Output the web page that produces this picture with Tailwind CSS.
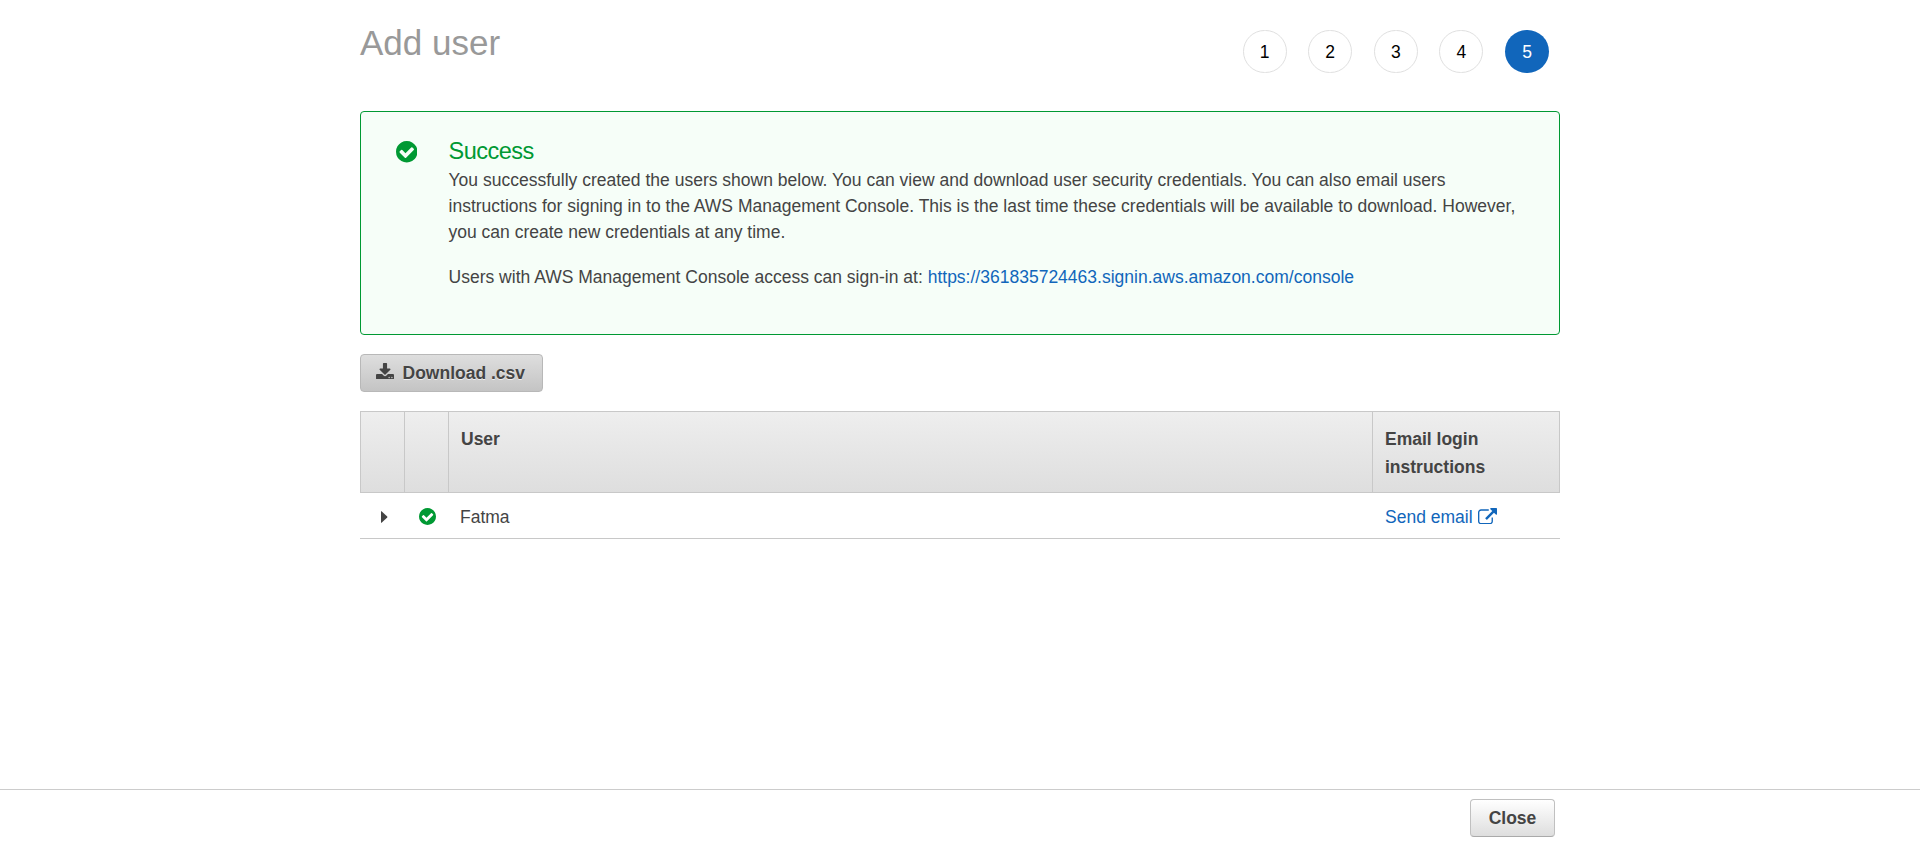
<!DOCTYPE html>
<html lang="en">
<head>
<meta charset="utf-8">
<title>Add user</title>
<script src="https://cdn.jsdelivr.net/npm/@tailwindcss/browser@4"></script>
</head>
<body class="h-screen overflow-hidden bg-white font-['Liberation_Sans',Arial,sans-serif] text-[17.5px] text-[#444] flex flex-col">
<main class="mx-auto w-[1200px] flex-1">
  <header class="flex h-[111px] justify-between pr-[11px]">
    <h1 class="pt-[22px] text-[35px] leading-[42px] text-[#999]">Add user</h1>
    <ol class="flex gap-[21.6px] pt-[30px] text-black">
      <li class="flex h-[43px] w-[44px] items-center justify-center rounded-full border border-[#e0e0e0] pt-[2px]">1</li>
      <li class="flex h-[43px] w-[44px] items-center justify-center rounded-full border border-[#e0e0e0] pt-[2px]">2</li>
      <li class="flex h-[43px] w-[44px] items-center justify-center rounded-full border border-[#e0e0e0] pt-[2px]">3</li>
      <li class="flex h-[43px] w-[44px] items-center justify-center rounded-full border border-[#e0e0e0] pt-[2px]">4</li>
      <li class="flex h-[43px] w-[44px] items-center justify-center rounded-full bg-[#1166bb] pt-[2px] text-white">5</li>
    </ol>
  </header>

  <section class="flex h-[224px] rounded-[4px] border border-[#009933] bg-[#f6fef8] pl-[34.5px] pt-[25px]">
    <svg class="mt-[4px] h-[21.5px] w-[21.5px] shrink-0 fill-[#009933]" viewBox="128 128 1536 1536"><path d="M1412 734q0-28-18-46l-91-90q-19-19-45-19t-45 19l-408 407-226-226q-19-19-45-19t-45 19l-91 90q-18 18-18 46 0 27 18 45l362 362q19 19 45 19 27 0 46-19l543-543q18-18 18-45zm252 162q0 209-103 385.5t-279.5 279.5-385.5 103-385.5-103-279.5-279.5-103-385.5 103-385.5 279.5-279.5 385.5-103 385.5 103 279.5 279.5 103 385.5z"/></svg>
    <div class="ml-[31.5px] whitespace-nowrap leading-[26px] tracking-[0.005px]">
      <h2 class="text-[23.5px] leading-[28px] tracking-[-0.5px] pb-[2px] text-[#009933]">Success</h2>
      <p>You successfully created the users shown below. You can view and download user security credentials. You can also email users<br>instructions for signing in to the AWS Management Console. This is the last time these credentials will be available to download. However,<br>you can create new credentials at any time.</p>
      <p class="mt-[19px]">Users with AWS Management Console access can sign-in at: <a class="text-[#1166bb]">https://361835724463.signin.aws.amazon.com/console</a></p>
    </div>
  </section>

  <button class="mt-[19px] flex h-[38px] w-[183px] items-center rounded-[4px] border border-[#b8b8b8] bg-linear-to-b from-[#dedede] to-[#c4c4c4] pl-[15px] font-bold text-[#444] text-shadow-[0_1px_0_#eee]">
    <svg class="mr-[8.5px] mb-[4px] h-[16.6px] w-[18px] fill-[#444]" viewBox="64 0 1664 1536"><path d="M1344 1344q0-26-19-45t-45-19-45 19-19 45 19 45 45 19 45-19 19-45zm256 0q0-26-19-45t-45-19-45 19-19 45 19 45 45 19 45-19 19-45zm128-224v320q0 40-28 68t-68 28h-1472q-40 0-68-28t-28-68v-320q0-40 28-68t68-28h465l135 136q58 56 136 56t136-56l136-136h464q40 0 68 28t28 68zm-325-569q17 41-14 70l-448 448q-18 19-45 19t-45-19l-448-448q-31-29-14-70 17-39 59-39h256v-448q0-26 19-45t45-19h256q26 0 45 19t19 45v448h256q42 0 59 39z"/></svg>
    <span>Download .csv</span>
  </button>

  <div class="mt-[19px] grid h-[82px] grid-cols-[44px_44px_924px_188px] border border-[#c8c8c8] bg-linear-to-b from-[#eee] to-[#dedede] font-bold leading-[28px]">
    <div class="border-r border-[#c8c8c8]"></div>
    <div class="border-r border-[#c8c8c8]"></div>
    <div class="border-r border-[#c8c8c8] pl-[12px] pt-[13px]">User</div>
    <div class="pl-[12px] pt-[13px]">Email login<br>instructions</div>
  </div>
  <div class="grid h-[46px] grid-cols-[45px_44px_924px_187px] items-center border-b border-[#c8c8c8] pt-[3px]">
    <svg class="ml-[20.5px] h-[12px] w-[7px] fill-[#444]" viewBox="0 0 7 12"><path d="M0 .6Q0 0 .6.3L6.2 5.5Q6.7 6 6.2 6.5L.6 11.7Q0 12 0 11.4Z"/></svg>
    <svg class="ml-[14px] mb-px h-[17px] w-[17px] fill-[#009933]" viewBox="128 128 1536 1536"><path d="M1412 734q0-28-18-46l-91-90q-19-19-45-19t-45 19l-408 407-226-226q-19-19-45-19t-45 19l-91 90q-18 18-18 46 0 27 18 45l362 362q19 19 45 19 27 0 46-19l543-543q18-18 18-45zm252 162q0 209-103 385.5t-279.5 279.5-385.5 103-385.5-103-279.5-279.5-103-385.5 103-385.5 279.5-279.5 385.5-103 385.5 103 279.5 279.5 103 385.5z"/></svg>
    <span class="pl-[11px]">Fatma</span>
    <a class="flex items-center pl-[12px] text-[#1166bb]">Send email<svg class="ml-[5px] mb-[2px] h-[16.3px] w-[19px] fill-[#1166bb]" viewBox="64 0 1792 1536"><path d="M1472 928v320q0 119-84.5 203.5t-203.5 84.5h-832q-119 0-203.5-84.5t-84.5-203.5v-832q0-119 84.5-203.5t203.5-84.5h704q14 0 23 9t9 23v64q0 14-9 23t-23 9h-704q-66 0-113 47t-47 113v832q0 66 47 113t113 47h832q66 0 113-47t47-113v-320q0-14 9-23t23-9h64q14 0 23 9t9 23zm384-864v512q0 26-19 45t-45 19-45-19l-176-176-652 652q-10 10-23 10t-23-10l-114-114q-10-10-10-23t10-23l652-652-176-176q-19-19-19-45t19-45 45-19h512q26 0 45 19t19 45z"/></svg></a>
  </div>
</main>
<footer class="h-[57px] border-t border-[#ccc]">
  <div class="mx-auto flex w-[1200px] justify-end pr-[5px] pt-[9px]">
    <button class="h-[38px] w-[85px] rounded-[4px] border border-[#c0c0c0] border-b-[#aaa] bg-linear-to-b from-white to-[#dedede] font-bold text-[#444]">Close</button>
  </div>
</footer>
</body>
</html>
